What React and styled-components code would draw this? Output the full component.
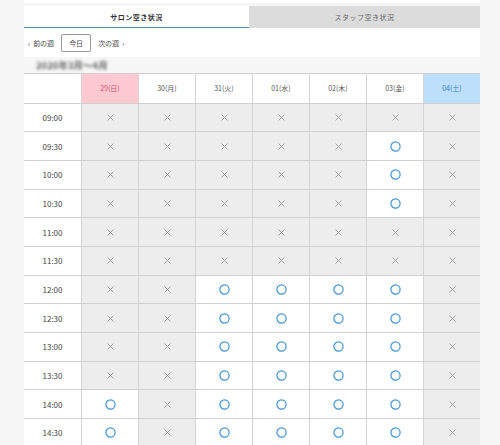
import React from "react";
import styled, { createGlobalStyle } from "styled-components";

const Global = createGlobalStyle`
  html, body { margin: 0; padding: 0; background: #f6f6f6; }
  body { font-family: "Noto Sans CJK JP", "Noto Sans", sans-serif; }
`;

const Page = styled.div`
  width: 456px;
  margin-left: 24px;
`;

const TopStrip = styled.div`
  height: 3px;
  background: #fff;
  margin-bottom: 3px;
`;

const Tabs = styled.div`
  display: grid;
  grid-template-columns: 225px 1fr;
`;

const Tab = styled.div`
  height: 21px;
  display: flex;
  align-items: center;
  justify-content: center;
  font-size: 7px;
  font-weight: ${(p) => (p.$active ? 700 : 400)};
  color: ${(p) => (p.$active ? "#333" : "#666")};
  background: ${(p) => (p.$active ? "#fff" : "#dcdcdc")};
  border-bottom: 1px solid ${(p) => (p.$active ? "#5b8ea6" : "#dcdcdc")};
  letter-spacing: 0.5px;
`;

const Panel = styled.div`
  background: #fff;
  height: 29px;
  display: flex;
  align-items: center;
  padding-left: 4px;
  gap: 7px;
`;

const NavLink = styled.span`
  font-size: 7px;
  color: #444;
  display: flex;
  align-items: center;
  gap: 3px;
`;

const TodayButton = styled.button`
  width: 30px;
  height: 18px;
  border: 1px solid #999;
  border-radius: 2px;
  background: #fff;
  font-family: inherit;
  font-size: 7px;
  color: #444;
  padding: 0;
  margin-top: 1px;
`;

const DateLabel = styled.div`
  height: 16px;
  display: flex;
  align-items: center;
  padding-left: 12px;
  font-size: 9.5px;
  font-weight: 700;
  color: #666;
  filter: blur(1.4px);
`;

const Grid = styled.div`
  display: grid;
  grid-template-columns: repeat(8, 57px);
  border-top: 1px solid #cfcfcf;
`;

const HeadCell = styled.div`
  display: flex;
  align-items: center;
  justify-content: center;
  font-size: 7px;
  background: ${(p) => p.$bg};
  color: ${(p) => p.$fg};
  border-left: ${(p) => (p.$first ? "none" : "1px solid #d4d4d4")};
  border-bottom: 1px solid #cfcfcf;
  box-sizing: border-box;
  height: 29.5px;
`;

const TimeCell = styled.div`
  height: 28.7px;
  box-sizing: border-box;
  display: flex;
  align-items: center;
  justify-content: center;
  font-size: 8px;
  color: #444;
  background: #fff;
  border-bottom: 1px solid #d0d0d0;
`;

const SlotCell = styled.div`
  height: 28.7px;
  box-sizing: border-box;
  display: flex;
  align-items: center;
  justify-content: center;
  background: ${(p) => (p.$open ? "#fff" : "#ededed")};
  border-left: 1px solid #d4d4d4;
  border-bottom: 1px solid #d0d0d0;
`;

const Cross = () => (
  <svg width="7" height="7" viewBox="0 0 7 7">
    <path d="M0.5 0.5 L6.5 6.5 M6.5 0.5 L0.5 6.5" stroke="#9c9c9c" strokeWidth="0.9" fill="none" />
  </svg>
);

const Circle = () => (
  <svg width="11" height="11" viewBox="0 0 11 11">
    <circle cx="5.5" cy="5.5" r="4.6" stroke="#3d95d6" strokeWidth="1.2" fill="none" />
  </svg>
);

const days = [
  { label: "29(日)", bg: "#ffc9d2", fg: "#c75070" },
  { label: "30(月)", bg: "#fff", fg: "#555" },
  { label: "31(火)", bg: "#fff", fg: "#555" },
  { label: "01(水)", bg: "#fff", fg: "#555" },
  { label: "02(木)", bg: "#fff", fg: "#555" },
  { label: "03(金)", bg: "#fff", fg: "#555" },
  { label: "04(土)", bg: "#bcdffb", fg: "#3b84c4" },
];

const rows = [
  ["09:00", "xxxxxxx"],
  ["09:30", "xxxxxox"],
  ["10:00", "xxxxxox"],
  ["10:30", "xxxxxox"],
  ["11:00", "xxxxxxx"],
  ["11:30", "xxxxxxx"],
  ["12:00", "xxoooox"],
  ["12:30", "xxoooox"],
  ["13:00", "xxoooox"],
  ["13:30", "xxoooox"],
  ["14:00", "oxoooox"],
  ["14:30", "oxoooox"],
];

export default function App() {
  return (
    <>
      <Global />
      <Page>
        <TopStrip />
        <Tabs>
          <Tab $active>サロン空き状況</Tab>
          <Tab>スタッフ空き状況</Tab>
        </Tabs>
        <Panel>
          <NavLink>
            <span>‹</span>
            <span>前の週</span>
          </NavLink>
          <TodayButton>今日</TodayButton>
          <NavLink>
            <span>次の週</span>
            <span>›</span>
          </NavLink>
        </Panel>
        <DateLabel>2020年3月〜4月</DateLabel>
        <Grid>
          <HeadCell $first $bg="#fff" $fg="#555" />
          {days.map((d) => (
            <HeadCell key={d.label} $bg={d.bg} $fg={d.fg}>
              {d.label}
            </HeadCell>
          ))}
          {rows.map(([time, slots]) => (
            <React.Fragment key={time}>
              <TimeCell>{time}</TimeCell>
              {slots.split("").map((s, i) => (
                <SlotCell key={i} $open={s === "o"}>
                  {s === "o" ? <Circle /> : <Cross />}
                </SlotCell>
              ))}
            </React.Fragment>
          ))}
        </Grid>
      </Page>
    </>
  );
}
